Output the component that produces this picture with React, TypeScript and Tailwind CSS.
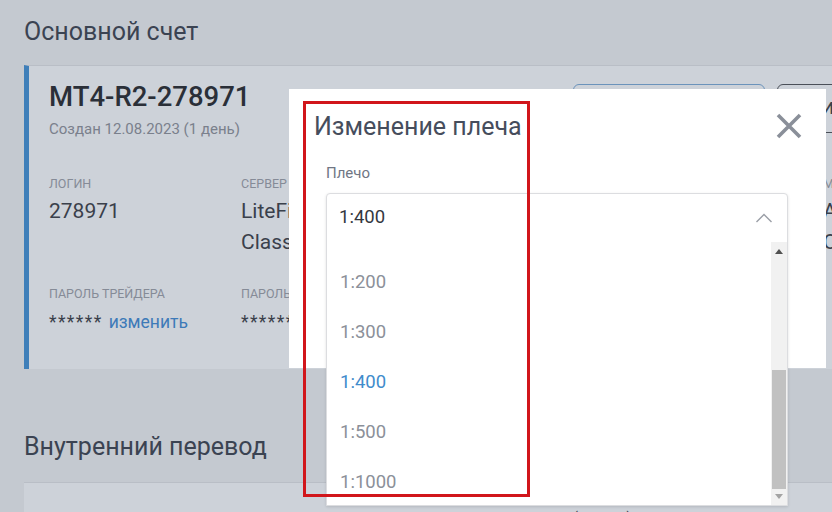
import React from "react";

const font = { fontFamily: "Roboto, 'Noto Sans', sans-serif" };

const items = ["1:1", "1:10", "1:25", "1:50", "1:100", "1:200", "1:300", "1:400", "1:500", "1:1000"];

function Field({ label, lines }: { label: string; lines: React.ReactNode[] }) {
  return (
    <div className="flex flex-col">
      <div className="h-[16px] text-[12.5px] leading-[16px] uppercase text-[#858b97] whitespace-nowrap">{label}</div>
      <div className="mt-[4px] text-[21px] leading-[31px] text-[#3a404b]">
        {lines.map((l, i) => (
          <div key={i} className="whitespace-nowrap">{l}</div>
        ))}
      </div>
    </div>
  );
}

function Password({ label }: { label: string }) {
  return (
    <div className="flex flex-col">
      <div className="h-[16px] text-[12.5px] leading-[16px] uppercase text-[#858b97] whitespace-nowrap">{label}</div>
      <div className="mt-[6px] text-[17.5px] leading-[28px] text-[#3a404b] whitespace-nowrap flex">
        <span className="tracking-[1.4px]">******</span>
        <span className="ml-[6px] text-[#3d7ab8]">изменить</span>
      </div>
    </div>
  );
}

export default function App() {
  return (
    <div className="relative w-[832px] h-[512px] overflow-hidden bg-[#c4c9d0]" style={font}>
      <div className="flex flex-col pl-[24px] pt-[18px]">
        <div className="h-[28px] text-[25px] leading-[28px] text-[#3b4352] whitespace-nowrap">Основной счет</div>

        {/* main card */}
        <div className="mt-[19px] w-[1000px] shrink-0 h-[304px] bg-[#cdd2d9] border-t border-[#b9bec6] border-l-[5px] border-l-[#3f7fb9] pl-[20px] pt-[14px] flex flex-col">
          <div className="flex">
            <div className="w-[524px] shrink-0 flex flex-col">
              <div className="h-[34px] text-[27.5px] leading-[34px] font-medium text-[#2a2f38] whitespace-nowrap">MT4-R2-278971</div>
              <div className="mt-[5px] h-[20px] text-[15px] leading-[20px] text-[#7a808c] whitespace-nowrap">Создан 12.08.2023 (1 день)</div>
            </div>
            <div className="flex shrink-0 gap-[12px] mt-[4px]">
              <div className="w-[192px] shrink-0 h-[49px] rounded-[6px] border border-[#6b93bb]" />
              <div className="w-[200px] shrink-0 h-[49px] rounded-[6px] border border-[#4a4f58] pl-[44px] flex items-center text-[17px] font-medium text-[#3a404b] whitespace-nowrap">
                История
              </div>
            </div>
          </div>

          <div className="mt-[37px] grid grid-cols-[192px_192px_192px_198px_auto] gap-y-[28px]">
            <Field label="Логин" lines={["278971"]} />
            <Field label="Сервер" lines={["LiteFinance-", "Classic"]} />
            <Field label="Тип" lines={["Classic"]} />
            <Field label="Валюта" lines={["USD"]} />
            <Field label="Маржа" lines={["А", "О"]} />
            <Password label="Пароль трейдера" />
            <Password label="Пароль инвестора" />
          </div>
        </div>

        <div className="mt-[64px] h-[28px] text-[25px] leading-[28px] text-[#3b4352] whitespace-nowrap">Внутренний перевод</div>
        <div className="mt-[21px] w-[1000px] shrink-0 h-[200px] bg-[#cdd2d9] border-t border-[#b9bec6] pl-[26px] pt-[24px] flex gap-[200px] text-[16px] text-[#3a404b]">
          <span>Со счета</span>
          <span>На счет</span>
          <span>(сумма)</span>
        </div>
      </div>

      {/* modal */}
      <div className="absolute left-[289px] top-[89px] w-[537px] h-[279px] bg-white">
        <div className="absolute left-[25px] top-[24px] h-[28px] text-[25px] leading-[28px] text-[#464d5c] whitespace-nowrap">Изменение плеча</div>
        <svg className="absolute left-[487px] top-[24px]" width="26" height="26" viewBox="0 0 26 26">
          <path d="M2 2 L24 24 M24 2 L2 24" stroke="#8a8f99" strokeWidth="3.6" strokeLinecap="butt" />
        </svg>
        <div className="absolute left-[37px] top-[74px] h-[20px] text-[15px] leading-[20px] text-[#707684]">Плечо</div>
      </div>

      {/* select + open dropdown */}
      <div className="absolute left-[326px] top-[193px] w-[462px] h-[313px] bg-white border border-[#dcdde0] rounded-t-[4px] shadow-[0_1px_3px_rgba(0,0,0,0.12)] flex flex-col">
        <div className="h-[48px] flex items-center justify-between pl-[12px] pr-[14px]">
          <span className="text-[18.5px] text-[#343840]">1:400</span>
          <svg width="18" height="12" viewBox="0 0 18 12">
            <path d="M1.5 10 L9 2.5 L16.5 10" fill="none" stroke="#9a9ea6" strokeWidth="1.4" />
          </svg>
        </div>
        <div className="flex-1 flex overflow-hidden">
          <div className="flex-1 flex flex-col justify-end overflow-hidden">
            {items.map((it) => (
              <div
                key={it}
                className={`shrink-0 h-[50px] flex items-center pl-[13px] pt-[6px] text-[18.5px] ${it === "1:400" ? "text-[#3f8ccc]" : "text-[#8b9099]"}`}
              >
                {it}
              </div>
            ))}
          </div>
          {/* scrollbar */}
          <div className="w-[16px] bg-[#f1f1f1] flex flex-col items-center">
            <svg className="mt-[7px]" width="8" height="5" viewBox="0 0 8 5">
              <path d="M0 5 L4 0 L8 5 Z" fill="#505050" />
            </svg>
            <div className="flex-1 w-full flex flex-col justify-end px-[1px]">
              <div className="h-[119px] w-full bg-[#c1c1c1]" />
            </div>
            <svg className="mt-[5px] mb-[6px]" width="8" height="5" viewBox="0 0 8 5">
              <path d="M0 0 L8 0 L4 5 Z" fill="#a3a3a3" />
            </svg>
          </div>
        </div>
      </div>

      {/* red annotation */}
      <div className="absolute left-[303px] top-[101px] w-[227px] h-[396px] border-[3px] border-[#d1161b]" />
    </div>
  );
}
